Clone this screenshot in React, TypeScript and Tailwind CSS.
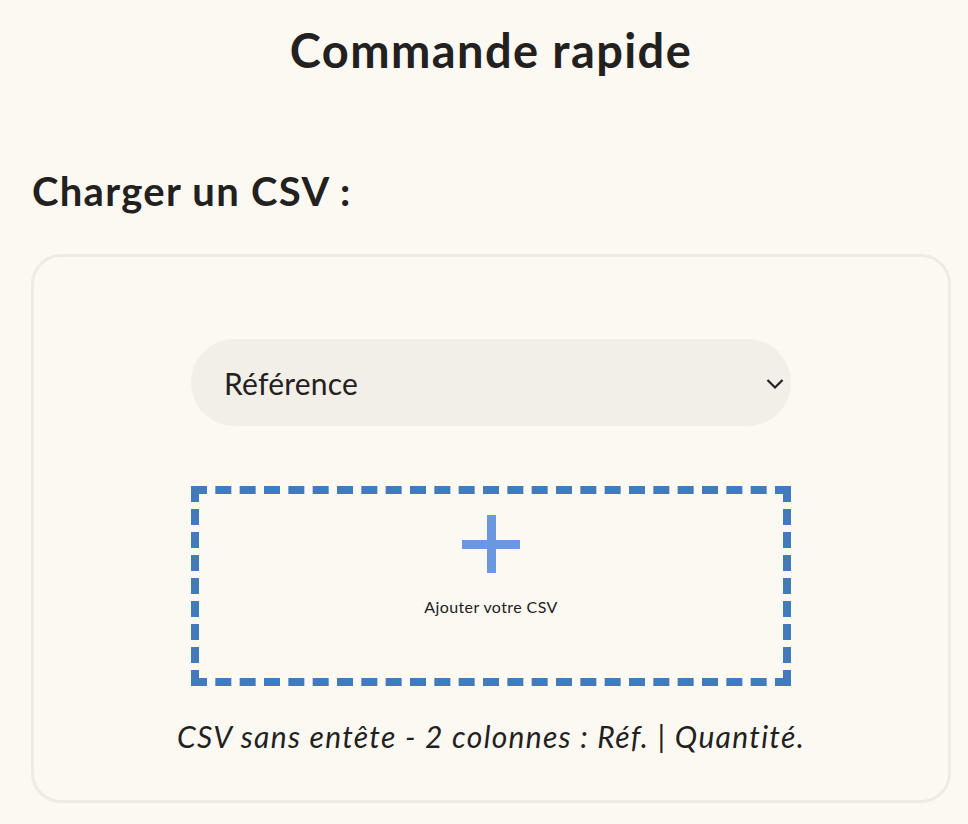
import React from "react";

export default function App() {
  return (
    <div
      className="min-h-[824px] w-full bg-[#fcf9f3] text-[#222120]"
      style={{ fontFamily: '"Lato", "Noto Sans", sans-serif' }}
    >
      <div className="ml-[31px] w-[920px]">
        <h1 className="pt-[22px] text-center text-[47px] font-bold leading-[56px] tracking-[1.4px]">
          Commande rapide
        </h1>
        <h2 className="mt-[91px] pl-[1px] text-[40px] font-bold leading-[44px] tracking-[1.3px]">
          Charger un CSV :
        </h2>
        <div className="mt-[41px] w-[920px] rounded-[30px] border-[3px] border-[#efebe4] pb-[46px] pt-[82px]">
          <div className="flex flex-col items-center">
            <div className="flex h-[87px] w-[600px] items-center justify-between rounded-full bg-[#f2eee8] pl-[33px] pr-[7px]">
              <span className="text-[30px] leading-none tracking-[0.2px]">Référence</span>
              <svg width="18" height="12" viewBox="0 0 18 12" fill="none" className="mt-[2px]">
                <path d="M1.5 2 L9 9.5 L16.5 2" stroke="#222120" strokeWidth="2.2" />
              </svg>
            </div>
            <div className="mt-[60px] flex h-[200px] w-[600px] flex-col items-center border-[8px] border-dashed border-[#437bb9] pt-[21px]">
              <svg width="58" height="58" viewBox="0 0 58 58">
                <rect x="25" y="0" width="9" height="58" fill="#6b96e0" />
                <rect x="0" y="25" width="58" height="9" fill="#6b96e0" />
              </svg>
              <span className="mt-[26px] text-[16px] leading-none tracking-[0.4px]">Ajouter votre CSV</span>
            </div>
            <p className="mt-[32px] text-[30px] italic leading-[36px] tracking-[1.3px]">
              CSV sans entête - 2 colonnes : Réf. | Quantité.
            </p>
          </div>
        </div>
      </div>
    </div>
  );
}
